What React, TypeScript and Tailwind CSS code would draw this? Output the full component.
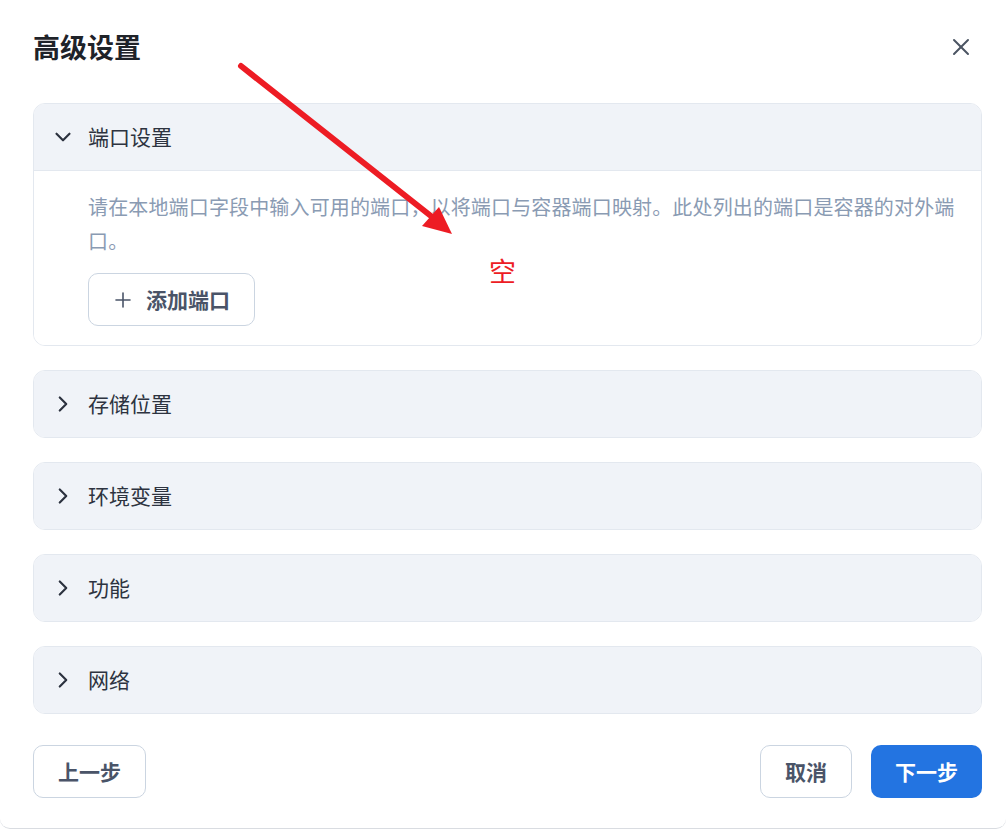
import React, { useState } from "react";
import { ChevronDown, ChevronRight, Plus, X } from "lucide-react";

const sections = ["端口设置", "存储位置", "环境变量", "功能", "网络"];

const font = { fontFamily: '"Noto Sans CJK SC", "Noto Sans", sans-serif' };

export default function App() {
    const [open, setOpen] = useState<string>("端口设置");

    return (
        <div className="relative w-[1006px] h-[831px] bg-white overflow-hidden" style={font}>
            <div className="flex flex-col h-[829px] border-b border-[#d9dce1] bg-white rounded-b-[10px]">
                {/* Header */}
                <div className="flex items-center justify-between pt-[28px] pl-[33px] pr-[31px]">
                    <h1 className="text-[27px] leading-[38px] font-bold text-[#1f2329]">高级设置</h1>
                    <button className="text-[#4b5563]">
                        <X size={28} strokeWidth={1.7} />
                    </button>
                </div>

                {/* Sections */}
                <div className="flex flex-col gap-6 mt-[37px] pl-[33px] pr-[24px]">
                    {sections.map((name) => {
                        const isOpen = open === name;
                        return (
                            <div
                                key={name}
                                className="border border-[#e3e8ef] rounded-[12px] overflow-hidden"
                            >
                                <button
                                    type="button"
                                    onClick={() => setOpen(isOpen ? "" : name)}
                                    className={`w-full h-[66px] flex items-center gap-[12px] pl-[16px] bg-[#f0f3f8] text-left ${isOpen ? "border-b border-[#e3e8ef] h-[67px]" : ""}`}
                                >
                                    {isOpen ? (
                                        <ChevronDown size={26} strokeWidth={2} className="text-[#2d3340]" />
                                    ) : (
                                        <ChevronRight size={26} strokeWidth={2} className="text-[#2d3340]" />
                                    )}
                                    <span className="text-[21px] text-[#2d3340]">{name}</span>
                                </button>
                                {isOpen && (
                                    <div className="pl-[54px] pr-[22px] pt-[19px] pb-[19px] bg-white">
                                        <p className="text-[20px] leading-[34px] tracking-[0.15px] text-[#8a9bb3]">
                                            请在本地端口字段中输入可用的端口，以将端口与容器端口映射。此处列出的端口是容器的对外端口。
                                        </p>
                                        <button
                                            type="button"
                                            className="mt-[15px] h-[53px] flex items-center gap-[11px] pl-[22px] pr-[24px] border border-[#cbd5e1] rounded-[10px] bg-white text-[#4a5468]"
                                        >
                                            <Plus size={24} strokeWidth={1.6} />
                                            <span className="text-[21px] font-bold">添加端口</span>
                                        </button>
                                    </div>
                                )}
                            </div>
                        );
                    })}
                </div>

                {/* Footer */}
                <div className="flex items-center justify-between mt-[31px] pl-[33px] pr-[24px]">
                    <button className="h-[53px] px-6 border border-[#cbd5e1] rounded-[10px] bg-white text-[21px] font-bold text-[#4a5468]">
                        上一步
                    </button>
                    <div className="flex items-center gap-[19px]">
                        <button className="h-[53px] px-6 border border-[#cbd5e1] rounded-[10px] bg-white text-[21px] font-bold text-[#4a5468]">
                            取消
                        </button>
                        <button className="h-[53px] px-6 rounded-[10px] bg-[#2374e1] text-[21px] font-bold text-white">
                            下一步
                        </button>
                    </div>
                </div>
            </div>

            {/* Red annotation over the dialog */}
            <svg className="absolute inset-0 pointer-events-none" width="1006" height="831">
                <line x1="241" y1="66" x2="436" y2="220" stroke="#ed1c24" strokeWidth="6" strokeLinecap="round" />
                <polygon points="452,234 422,226 439,207" fill="#ed1c24" />
            </svg>
            <span className="absolute left-[489px] top-[257px] text-[27px] leading-[28px] text-[#ed1c24]">空</span>
        </div>
    );
}
